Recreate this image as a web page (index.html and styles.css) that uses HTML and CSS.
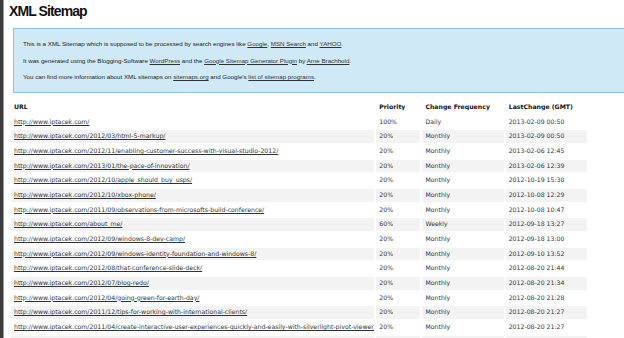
FILE: index.html
```html
<!DOCTYPE html>
<html lang="en">
<head>
    <meta charset="UTF-8">
    <title>XML Sitemap</title>
    <link rel="stylesheet" href="styles.css">
</head>
<body>
    <div class="page">
        <h1>XML Sitemap</h1>

        <div class="intro">
            <p>This is a XML Sitemap which is supposed to be processed by search engines like <a href="#">Google</a>, <a href="#">MSN Search</a> and <a href="#">YAHOO</a>.</p>
            <p>It was generated using the Blogging-Software <a href="#">WordPress</a> and the <a href="#">Google Sitemap Generator Plugin</a> by <a href="#">Arne Brachhold</a>.</p>
            <p>You can find more information about XML sitemaps on <a href="#">sitemaps.org</a> and Google's <a href="#">list of sitemap programs</a>.</p>
        </div>

        <table class="sitemap">
            <colgroup>
                <col class="col-url">
                <col class="col-prio">
                <col class="col-freq">
                <col class="col-last">
            </colgroup>
            <tr class="head">
                <th>URL</th>
                <th>Priority</th>
                <th>Change Frequency</th>
                <th>LastChange (GMT)</th>
            </tr>
            <tr><td><a href="#">http://www.iptacek.com/</a></td><td>100%</td><td>Daily</td><td>2013-02-09 00:50</td></tr>
            <tr class="odd"><td><a href="#">http://www.iptacek.com/2012/03/html-5-markup/</a></td><td>20%</td><td>Monthly</td><td>2013-02-09 00:50</td></tr>
            <tr><td><a href="#">http://www.iptacek.com/2012/11/enabling-customer-success-with-visual-studio-2012/</a></td><td>20%</td><td>Monthly</td><td>2013-02-06 12:45</td></tr>
            <tr class="odd"><td><a href="#">http://www.iptacek.com/2013/01/the-pace-of-innovation/</a></td><td>20%</td><td>Monthly</td><td>2013-02-06 12:39</td></tr>
            <tr><td><a href="#">http://www.iptacek.com/2012/10/apple_should_buy_usps/</a></td><td>20%</td><td>Monthly</td><td>2012-10-19 15:30</td></tr>
            <tr class="odd"><td><a href="#">http://www.iptacek.com/2012/10/xbox-phone/</a></td><td>20%</td><td>Monthly</td><td>2012-10-08 12:29</td></tr>
            <tr><td><a href="#">http://www.iptacek.com/2011/09/observations-from-microsofts-build-conference/</a></td><td>20%</td><td>Monthly</td><td>2012-10-08 10:47</td></tr>
            <tr class="odd"><td><a href="#">http://www.iptacek.com/about_me/</a></td><td>60%</td><td>Weekly</td><td>2012-09-18 13:27</td></tr>
            <tr><td><a href="#">http://www.iptacek.com/2012/09/windows-8-dev-camp/</a></td><td>20%</td><td>Monthly</td><td>2012-09-18 13:00</td></tr>
            <tr class="odd"><td><a href="#">http://www.iptacek.com/2012/09/windows-identity-foundation-and-windows-8/</a></td><td>20%</td><td>Monthly</td><td>2012-09-10 13:52</td></tr>
            <tr><td><a href="#">http://www.iptacek.com/2012/08/that-conference-slide-deck/</a></td><td>20%</td><td>Monthly</td><td>2012-08-20 21:44</td></tr>
            <tr class="odd"><td><a href="#">http://www.iptacek.com/2012/07/blog-redo/</a></td><td>20%</td><td>Monthly</td><td>2012-08-20 21:34</td></tr>
            <tr><td><a href="#">http://www.iptacek.com/2012/04/going-green-for-earth-day/</a></td><td>20%</td><td>Monthly</td><td>2012-08-20 21:28</td></tr>
            <tr class="odd"><td><a href="#">http://www.iptacek.com/2011/12/tips-for-working-with-international-clients/</a></td><td>20%</td><td>Monthly</td><td>2012-08-20 21:27</td></tr>
            <tr><td><a href="#">http://www.iptacek.com/2011/04/create-interactive-user-experiences-quickly-and-easily-with-silverlight-pivot-viewer/</a></td><td>20%</td><td>Monthly</td><td>2012-08-20 21:27</td></tr>
            <tr class="odd"><td>&nbsp;</td><td>&nbsp;</td><td>&nbsp;</td><td>&nbsp;</td></tr>
        </table>
    </div>
</body>
</html>
```

FILE: styles.css
```css
* {
    margin: 0;
    padding: 0;
    box-sizing: border-box;
}

html, body {
    height: 100%;
    overflow: hidden;
    background: white;
}

body {
    font-family: 'DejaVu Sans', Verdana, sans-serif;
    color: #333;
    border-left: 3px solid #3b3b3b;
}

.page {
    height: 100%;
    border-left: 1px solid #9a9a9a;
    padding-left: 5px;
}

h1 {
    font-family: 'Liberation Sans', Arial, sans-serif;
    font-size: 14px;
    letter-spacing: -0.9px;
    line-height: 22px;
    height: 28px;
    font-weight: bold;
    color: #111;
}

.intro {
    margin-left: 4px;
    margin-right: -60px;
    background: #d0e9f6;
    border: 1px solid #93c2e0;
    padding: 10px 9px 11px;
    font-family: 'Liberation Sans', Arial, sans-serif;
    font-size: 6.2px;
    color: #222;
}

.intro p {
    line-height: 9px;
    margin-bottom: 7.5px;
}

.intro p:last-child {
    margin-bottom: 0;
}

a {
    color: #333;
}

.sitemap {
    margin-top: 6px;
    border-spacing: 2px;
    font-size: 6.2px;
    table-layout: fixed;
    width: 580px;
}

.col-url { width: 362px; }
.col-prio { width: 44px; }
.col-freq { width: 81px; }
.col-last { width: 81px; }

.sitemap th,
.sitemap td {
    text-align: left;
    padding: 0 3px;
    height: 12.67px;
    line-height: 12.67px;
    white-space: nowrap;
    overflow: hidden;
}

.sitemap th {
    font-weight: bold;
    color: #111;
}

.sitemap tr.odd td {
    background: #f3f3f3;
}
```
